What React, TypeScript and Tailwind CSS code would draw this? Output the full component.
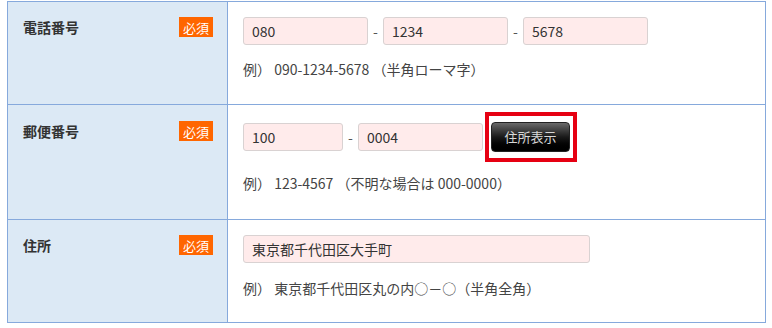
import React from 'react';

const font = { fontFamily: '"Noto Sans CJK JP", "Noto Sans", sans-serif' };

function Badge() {
  return (
    <span className="inline-flex h-[20px] items-center bg-[#ff6600] px-[4px] text-[13px] leading-none text-white">
      必須
    </span>
  );
}

function Label({ text, pt }: { text: string; pt: string }) {
  return (
    <div className={`w-[220px] shrink-0 border-r border-[#86a9dc] bg-[#dce9f5] pl-[15px] pr-[14px] ${pt}`}>
      <div className="flex h-[20px] items-center justify-between">
        <span className="text-[14px] font-bold leading-none text-[#333]">{text}</span>
        <Badge />
      </div>
    </div>
  );
}

function Field({ value, w }: { value: string; w: string }) {
  return (
    <input
      readOnly
      value={value}
      className={`${w} h-[28px] rounded-[3px] border border-[#d9d2d2] bg-[#ffebeb] px-[8px] text-[14px] text-[#333] outline-none`}
    />
  );
}

function Dash() {
  return <span className="w-[15px] text-center text-[14px] text-[#555]">-</span>;
}

export default function App() {
  return (
    <div className="h-[328px] w-[772px] bg-white pl-[7px] pt-[1px]" style={font}>
      <div className="w-[759px] border border-[#86a9dc]">
        {/* 電話番号 */}
        <div className="flex h-[103px] border-b border-[#86a9dc]">
          <Label text="電話番号" pt="pt-[15px]" />
          <div className="flex-1 pl-[15px] pt-[15px]">
            <div className="flex items-center">
              <Field value="080" w="w-[125px]" />
              <Dash />
              <Field value="1234" w="w-[125px]" />
              <Dash />
              <Field value="5678" w="w-[125px]" />
            </div>
            <p className="mt-[14px] text-[14px] leading-[20px] text-[#444]">例） 090-1234-5678 （半角ローマ字）</p>
          </div>
        </div>

        {/* 郵便番号 */}
        <div className="flex h-[115px] border-b border-[#86a9dc]">
          <Label text="郵便番号" pt="pt-[16px]" />
          <div className="flex-1 pl-[15px] pt-[17px]">
            <div className="flex items-center">
              <Field value="100" w="w-[100px]" />
              <Dash />
              <Field value="0004" w="w-[125px]" />
              <div className="relative ml-[8px]">
                <button className="h-[30px] w-[79px] rounded-[4px] border border-[#222] bg-gradient-to-b from-[#6a6a6a] via-[#1a1a1a] to-black text-[13px] text-[#d8d8d8]">
                  住所表示
                </button>
                <div className="absolute left-[-6px] right-[-7px] top-[-10px] bottom-[-10px] border-4 border-[#e60012]" />
              </div>
            </div>
            <p className="mt-[21px] text-[14px] leading-[20px] text-[#444]">例） 123-4567 （不明な場合は 000-0000）</p>
          </div>
        </div>

        {/* 住所 */}
        <div className="flex h-[102px]">
          <Label text="住所" pt="pt-[15px]" />
          <div className="flex-1 pl-[15px] pt-[15px]">
            <Field value="東京都千代田区大手町" w="w-[347px]" />
            <p className="mt-[15px] text-[14px] leading-[20px] text-[#444]">例） 東京都千代田区丸の内○－○（半角全角）</p>
          </div>
        </div>
      </div>
    </div>
  );
}
